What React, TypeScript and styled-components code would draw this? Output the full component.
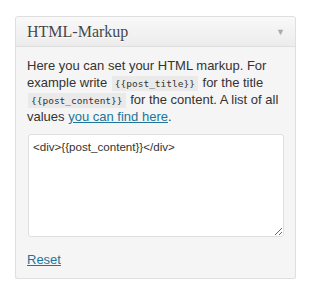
import React from "react";
import styled, { createGlobalStyle } from "styled-components";

const Global = createGlobalStyle`
  html, body { margin: 0; padding: 0; background: #ffffff; }
  body { font-family: "Liberation Sans", Arial, sans-serif; }
`;

const Page = styled.div`
  padding: 16px 15px 0 15px;
`;

const Widget = styled.div`
  box-sizing: border-box;
  width: 281px;
  border: 1px solid #dfdfdf;
  border-radius: 3px;
  background: #f5f5f5;
  box-shadow: 0 1px 0 #ececec;
`;

const Header = styled.div`
  height: 29px;
  display: flex;
  align-items: center;
  justify-content: space-between;
  padding: 0 10px 0 11px;
  background: linear-gradient(to bottom, #f9f9f9, #ececec);
  border-bottom: 1px solid #dfdfdf;
  border-radius: 3px 3px 0 0;
`;

const Title = styled.h3`
  margin: 0;
  font-family: Georgia, "Liberation Serif", serif;
  font-weight: normal;
  font-size: 16px;
  color: #464646;
  text-shadow: 0 1px 0 #fff;
`;

const Arrow = styled.span`
  font-size: 9px;
  color: #aaaaaa;
  margin-top: 1px;
`;

const Body = styled.div`
  padding: 10px 11px 10px 11px;
`;

const Text = styled.p`
  margin: 0;
  font-size: 13px;
  line-height: 17px;
  color: #333333;
`;

const Code = styled.code`
  font-family: "DejaVu Sans Mono", monospace;
  font-size: 9.5px;
  line-height: 1;
  background: #eaeaea;
  padding: 2px 3px;
  margin: 0 1px;
  color: #333;
`;

const Link = styled.a`
  color: #21759b;
  text-decoration: underline;
`;

const Area = styled.textarea`
  display: block;
  box-sizing: border-box;
  width: 256px;
  height: 103px;
  margin: 9px 0 0 1px;
  padding: 4px 4px;
  border: 1px solid #dfdfdf;
  border-radius: 3px;
  background: #ffffff;
  font-family: "Liberation Sans", Arial, sans-serif;
  font-size: 11.6px;
  line-height: 15px;
  color: #333;
  outline: none;
`;

const Footer = styled.div`
  margin-top: 14px;
  font-size: 13px;
  line-height: 17px;
`;

export default function App() {
  return (
    <>
      <Global />
      <Page>
        <Widget>
          <Header>
            <Title>HTML-Markup</Title>
            <Arrow>▼</Arrow>
          </Header>
          <Body>
            <Text>
              Here you can set your HTML markup. For example write{" "}
              <Code>{"{{post_title}}"}</Code> for the title{" "}
              <Code>{"{{post_content}}"}</Code> for the content. A list of all
              values <Link href="#">you can find here</Link>.
            </Text>
            <Area defaultValue={"<div>{{post_content}}</div>"} />
            <Footer>
              <Link href="#">Reset</Link>
            </Footer>
          </Body>
        </Widget>
      </Page>
    </>
  );
}
